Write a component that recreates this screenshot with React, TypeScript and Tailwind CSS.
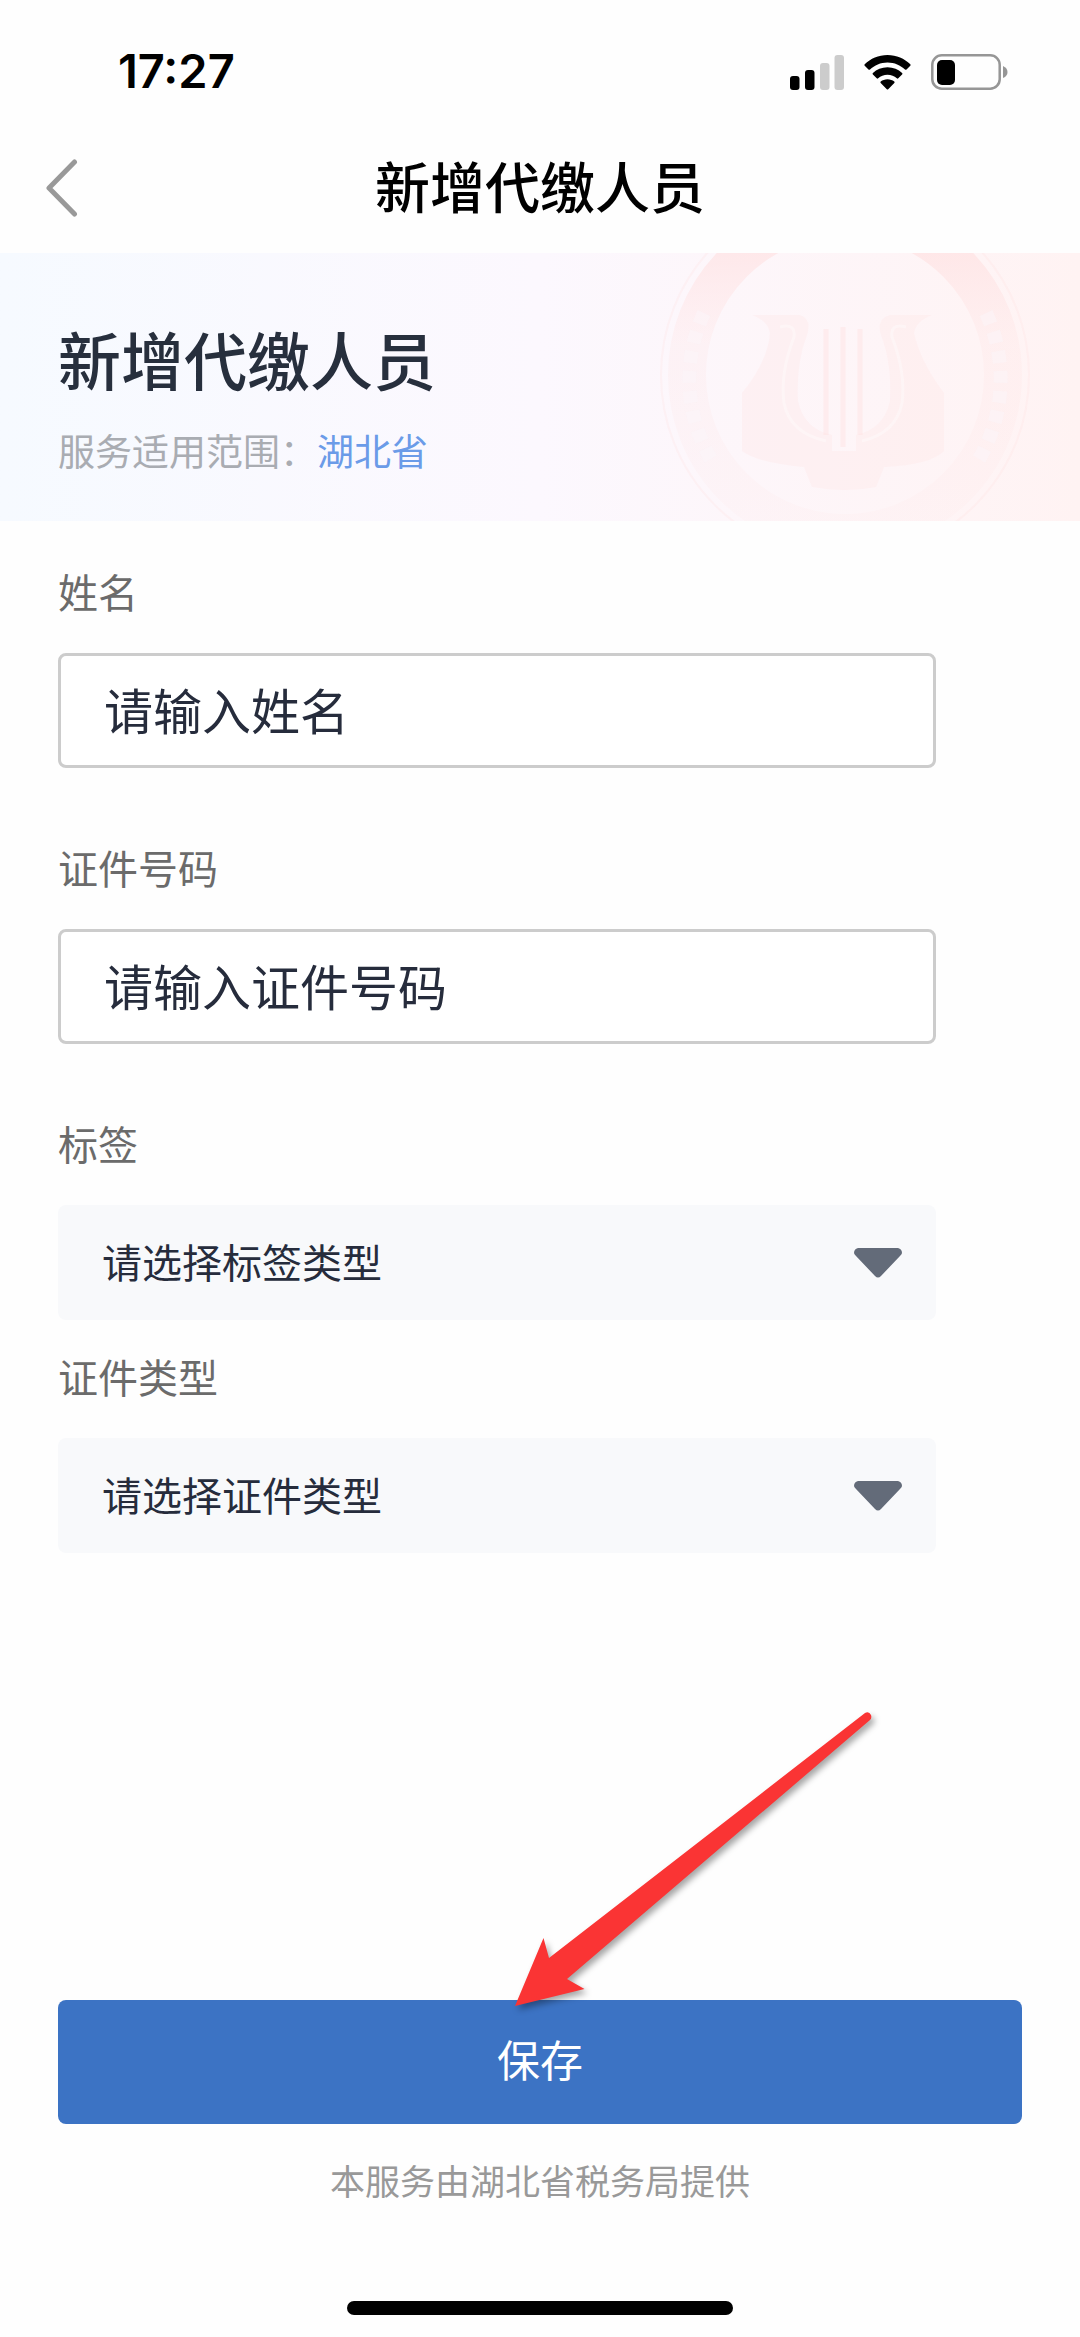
import { useState } from 'react';

interface IFieldProps {
  id: string;
  label: string;
  placeholder: string;
}

const TextField: React.FC<IFieldProps> = ({ id, label, placeholder }) => {
  const [value, setValue] = useState('');

  return (
    <div className="flex flex-col gap-8">
      <label htmlFor={id} className="text-[40px] leading-[60px] text-[#6b6b6b]">
        {label}
      </label>
      <input
        id={id}
        type="text"
        value={value}
        placeholder={placeholder}
        onChange={(e) => setValue(e.target.value)}
        className="h-[115px] w-full rounded-lg border-[3px] border-[#ccc] bg-white px-[43px] pb-1 text-[49px] text-[#262c3c] outline-none placeholder:text-[#262c3c] placeholder:opacity-100"
      />
    </div>
  );
};

const SelectField: React.FC<IFieldProps> = ({ id, label, placeholder }) => {
  return (
    <div className="flex flex-col gap-8">
      <label htmlFor={id} className="text-[40px] leading-[60px] text-[#6b6b6b]">
        {label}
      </label>
      <div className="relative">
        <select
          id={id}
          className="h-[115px] w-full appearance-none rounded-lg bg-[#f8f9fb] px-11 pb-1 text-[40px] text-[#262c3c] outline-none"
        >
          <option value="">{placeholder}</option>
        </select>
        <svg
          viewBox="0 0 48 30"
          className="pointer-events-none absolute top-[43px] right-[34px] h-[30px] w-12"
          fill="#636b79"
        >
          <path d="M4 0H44Q48 1 48 5Q48 6 46 8L27 28Q24 31 21 28L2 8Q0 6 0 5Q0 1 4 0Z" />
        </svg>
      </div>
    </div>
  );
};

const StatusBar = () => (
  <div className="flex h-36 items-center justify-between pr-[72px] pl-[118px]">
    <span className="pb-[3px] font-['Inter','Noto_Sans_CJK_SC',sans-serif] text-[47px] leading-none font-semibold text-black">
      17:27
    </span>
    <div className="flex items-center gap-5">
      <svg viewBox="0 0 54 35" className="h-[35px] w-[54px]">
        <rect x="0" y="21" width="9.5" height="14" rx="3" fill="#000" />
        <rect x="15" y="15" width="9.5" height="20" rx="3" fill="#000" />
        <rect x="30" y="8" width="9.5" height="27" rx="3" fill="#ccc" />
        <rect x="44.5" y="0" width="9.5" height="35" rx="3" fill="#ccc" />
      </svg>
      <svg viewBox="0 0 47 35" className="h-[35px] w-[47px]" fill="#000">
        <path d="M23.500 0C32.500 0 40.500 3.500 46.300 9.300Q47 10 46.300 10.700L42.500 14.500Q41.800 15.200 41 14.500C36.500 10.200 30.500 7.400 23.500 7.400S10.500 10.200 6 14.500Q5.200 15.200 4.500 14.500L.7 10.700Q0 10 .7 9.300C6.500 3.500 14.500 0 23.500 0Z" />
        <path d="M23.500 12.300C29.300 12.300 34.300 14.500 38.100 18Q38.900 18.800 38.100 19.500L34.300 23.300Q33.600 24 32.800 23.300C30.300 21.100 27.200 19.700 23.500 19.700S16.700 21.100 14.200 23.300Q13.400 24 12.700 23.300L8.900 19.500Q8.100 18.800 8.900 18C12.700 14.500 17.700 12.300 23.500 12.300Z" />
        <path d="M23.500 24.300C26.200 24.300 28.500 25.200 30.300 26.600Q31 27.200 30.300 28L24.200 34.200Q23.500 35 22.800 34.200L16.700 28Q16 27.200 16.700 26.600C18.500 25.200 20.800 24.300 23.500 24.300Z" />
      </svg>
      <svg viewBox="0 0 77 36" className="h-9 w-[77px]">
        <rect
          x="1.3"
          y="1.3"
          width="67.4"
          height="33.4"
          rx="9.5"
          fill="none"
          stroke="#969696"
          strokeWidth="2.5"
        />
        <rect x="6" y="6" width="18" height="25" rx="5" fill="#000" />
        <path d="M72 12Q76.500 14 76.500 18T72 24Z" fill="#969696" />
      </svg>
    </div>
  </div>
);

const Emblem = () => (
  <svg
    viewBox="0 0 480 268"
    className="pointer-events-none absolute top-0 right-0 h-full w-[480px]"
    fill="none"
  >
    <defs>
      <linearGradient id="ring" x1="0" y1="0" x2="0" y2="1">
        <stop offset="0.1" stopColor="#ffdcdc" stopOpacity="0.55" />
        <stop offset="0.4" stopColor="#ffe2e2" stopOpacity="0.25" />
        <stop offset="1" stopColor="#ffe2e2" stopOpacity="0.12" />
      </linearGradient>
    </defs>
    <circle cx="245" cy="122" r="158" stroke="url(#ring)" strokeWidth="38" />
    <circle cx="245" cy="122" r="184" stroke="#ffdede" strokeOpacity="0.25" strokeWidth="2" />
    <g stroke="#fbf5fa" strokeOpacity="0.5" strokeWidth="14" strokeDasharray="12 8">
      <path d="M104 60A158 158 0 0 0 112 208" />
      <path d="M386 60A158 158 0 0 1 378 208" />
    </g>
    {/* lyre body */}
    <g fill="#ffe2e2" fillOpacity="0.28">
      <path d="M152 62H200Q212 66 207 82Q196 110 198 148Q204 176 232 182V198H142V140Q168 108 170 80Q168 68 152 62Z" />
      <path d="M332 62H290Q276 66 281 82Q292 110 290 148Q284 176 256 182V198H344V140Q320 108 314 80Q316 68 332 62Z" />
      <path d="M142 198H344Q330 212 284 214L276 234Q244 240 212 234L204 214Q158 210 142 198Z" />
    </g>
    <path
      d="M226 76V182M243 74V194M260 76V182"
      stroke="#ffdede"
      strokeOpacity="0.4"
      strokeWidth="5"
    />
    <g stroke="#fff" strokeOpacity="0.35" strokeWidth="3">
      <path d="M180 74Q196 70 194 84Q180 120 184 150Q190 180 226 188" />
      <path d="M306 74Q290 70 292 84Q306 120 302 150Q296 180 262 188" />
    </g>
  </svg>
);

const App = () => {
  return (
    <div className="flex min-h-screen flex-col bg-[#fefefe] font-['Noto_Sans_CJK_SC',sans-serif]">
      <header className="pb-[21px]">
        <StatusBar />
        <div className="grid h-[88px] grid-cols-[1fr_auto_1fr] items-center px-[46px]">
          <button type="button" aria-label="返回" className="justify-self-start">
            <svg
              viewBox="0 0 32 58"
              className="h-[58px] w-8"
              fill="none"
              stroke="#999"
              strokeWidth="5"
              strokeLinecap="round"
              strokeLinejoin="round"
            >
              <path d="M28.500 3L3 29L28.500 55" />
            </svg>
          </button>
          <h1 className="pb-2 text-[55px] leading-none font-medium text-black">新增代缴人员</h1>
        </div>
      </header>

      <section className="relative flex h-[268px] flex-col justify-center gap-[22px] overflow-hidden bg-linear-to-r from-[#f6faff] via-[#fcf8fe] to-[#fff3f3] px-[58px] pt-6">
        <Emblem />
        <h2 className="text-[63px] leading-[80px] font-medium text-[#272f3d]">新增代缴人员</h2>
        <p className="text-[37px] leading-[60px] text-[#a9acb2]">
          服务适用范围：
          <a href="#region" className="text-[#6b9be8]">
            湖北省
          </a>
        </p>
      </section>

      <form className="flex flex-1 flex-col" onSubmit={(e) => e.preventDefault()}>
        <div className="flex flex-col gap-[69px] pt-10 pr-36 pl-[58px]">
          <TextField id="name" label="姓名" placeholder="请输入姓名" />
          <TextField id="idNumber" label="证件号码" placeholder="请输入证件号码" />
          <div className="flex flex-col gap-[26px]">
            <SelectField id="tag" label="标签" placeholder="请选择标签类型" />
            <SelectField id="idType" label="证件类型" placeholder="请选择证件类型" />
          </div>
        </div>

        <div className="relative mt-auto px-[58px] pt-16">
          <button
            type="submit"
            className="h-[124px] w-full rounded-lg bg-[#3c73c4] pb-2 text-[43px] text-white"
          >
            保存
          </button>
          {/* arrow pointing at the save button */}
          <svg
            viewBox="0 0 380 310"
            className="pointer-events-none absolute bottom-[110px] left-1/2 -ml-[30px] h-[310px] w-[380px] drop-shadow-[3px_4px_3px_rgba(0,0,0,0.35)]"
            fill="#fa3434"
          >
            <path d="M5 302L33.500 234L39 254L355 9Q359 7 361 11Q362 14 360 16L57 275L74.500 285Z" />
          </svg>
        </div>
      </form>

      <footer className="flex flex-col items-center gap-24 pt-[31px] pb-[22px]">
        <p className="text-[35px] leading-[50px] text-[#999]">本服务由湖北省税务局提供</p>
        <div className="h-3.5 w-[386px] rounded-full bg-black" />
      </footer>
    </div>
  );
};

export default App;
